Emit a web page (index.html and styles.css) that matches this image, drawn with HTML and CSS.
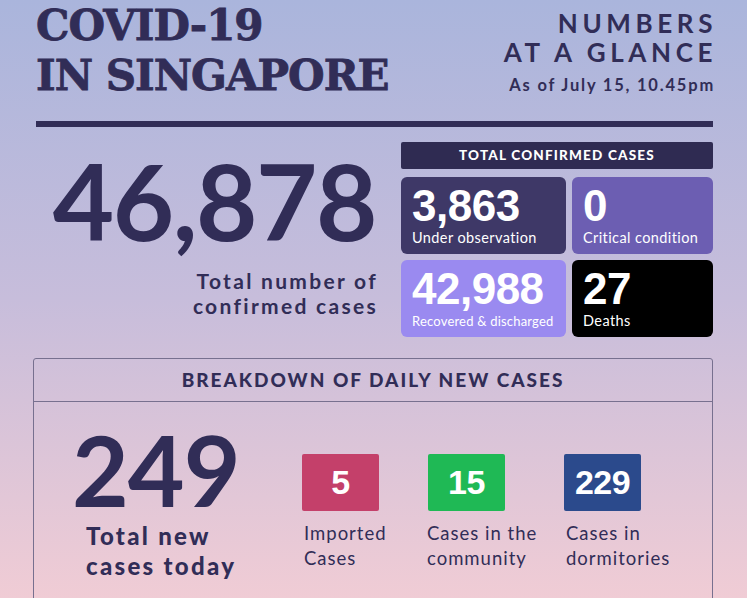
FILE: index.html
```html
<!DOCTYPE html>
<html>
<head>
<meta charset="utf-8">
<link rel="stylesheet" href="styles.css">
</head>
<body>
<div class="page">
  <header class="top">
    <h1 class="title">COVID-19<br>IN SINGAPORE</h1>
    <div class="glance">
      <div class="glance-head">NUMBERS<br>AT A GLANCE</div>
      <div class="asof">As of July 15, 10.45pm</div>
    </div>
  </header>
  <div class="rule"></div>
  <section class="summary">
    <div class="total">
      <div class="total-num">46,878</div>
      <div class="total-label">Total number of<br>confirmed cases</div>
    </div>
    <div class="panel">
      <div class="panel-head">TOTAL CONFIRMED CASES</div>
      <div class="cards">
        <div class="card c-obs"><div class="card-num">3,863</div><div class="card-label">Under observation</div></div>
        <div class="card c-crit"><div class="card-num">0</div><div class="card-label">Critical condition</div></div>
        <div class="card c-rec"><div class="card-num">42,988</div><div class="card-label">Recovered &amp; discharged</div></div>
        <div class="card c-death"><div class="card-num">27</div><div class="card-label">Deaths</div></div>
      </div>
    </div>
  </section>
  <section class="breakdown">
    <div class="bd-head">BREAKDOWN OF DAILY NEW CASES</div>
    <div class="bd-body">
      <div class="new-total">
        <div class="new-num">249</div>
        <div class="new-label">Total new<br>cases today</div>
      </div>
      <div class="types">
        <div class="type t1"><div class="tbox red">5</div><div class="tlabel">Imported<br>Cases</div></div>
        <div class="type t2"><div class="tbox green">15</div><div class="tlabel">Cases in the<br>community</div></div>
        <div class="type t3"><div class="tbox blue">229</div><div class="tlabel">Cases in<br>dormitories</div></div>
      </div>
    </div>
  </section>
</div>
</body>
</html>
```
FILE: styles.css
```css
html, body {
  margin: 0;
  padding: 0;
}
body {
  width: 747px;
  height: 598px;
  overflow: hidden;
  background: linear-gradient(180deg, #aab5dc 0%, #c7bddb 50%, #f0ccd5 100%);
  color: #312d57;
  font-family: "Lato", "Liberation Sans", sans-serif;
}
.page {
  padding: 0 34px 0 36px;
}
.top {
  display: flex;
  justify-content: space-between;
  align-items: flex-start;
}
.title {
  margin: 0;
  padding-top: 1px;
  font-family: "DejaVu Serif", "Liberation Serif", serif;
  font-weight: 700;
  font-size: 42px;
  line-height: 50px;
  letter-spacing: -1px;
  color: #312d57;
  -webkit-text-stroke: 0.8px #312d57;
}
.glance {
  text-align: right;
  padding-top: 9px;
}
.glance-head {
  font-weight: 700;
  font-size: 26px;
  line-height: 29px;
  letter-spacing: 4.6px;
  margin-right: -4px;
}
.asof {
  font-weight: 700;
  font-size: 16.5px;
  line-height: 18px;
  margin-top: 9px;
  letter-spacing: 1.8px;
  margin-right: -2px;
}
.rule {
  height: 6px;
  background: #312d57;
  margin-top: 20px;
}
.summary {
  display: flex;
  justify-content: space-between;
  margin-top: 15px;
}
.total {
  width: 340px;
  text-align: right;
}
.total-num {
  font-weight: 700;
  font-size: 106px;
  line-height: 108px;
  margin-top: 4px;
  letter-spacing: -1.5px;
}
.total-label {
  font-weight: 700;
  font-size: 21px;
  line-height: 25px;
  letter-spacing: 2.3px;
  margin-top: 14px;
  margin-right: -2px;
}
.panel {
  width: 312px;
}
.panel-head {
  background: #2f2b52;
  color: #fff;
  height: 27px;
  line-height: 27px;
  text-align: center;
  font-weight: 900;
  font-size: 13.5px;
  letter-spacing: 1.2px;
  border-radius: 2px;
}
.cards {
  margin-top: 8px;
  display: grid;
  grid-template-columns: 165px 141px;
  grid-auto-rows: 77px;
  gap: 6px;
}
.card {
  border-radius: 6px;
  color: #fff;
  padding: 6px 0 0 11px;
  box-sizing: border-box;
}
.card-num {
  font-family: "Liberation Sans", Arial, sans-serif;
  font-weight: 700;
  font-size: 44px;
  line-height: 46px;
  letter-spacing: -0.5px;
}
.card-label {
  font-size: 14.5px;
  line-height: 16px;
  margin-top: 1px;
  letter-spacing: 0.4px;
}
.c-obs { background: #3e3867; }
.c-crit { background: #6c5eb2; }
.c-rec { background: #9a8af0; }
.c-death { background: #000; }
.c-rec .card-label { font-size: 13px; letter-spacing: 0.2px; }
.breakdown {
  margin: 21px 0 0 -3px;
  border: 1px solid #77708f;
  border-radius: 3px;
  height: 300px;
}
.bd-head {
  height: 42px;
  line-height: 42px;
  border-bottom: 1px solid #77708f;
  text-align: center;
  font-weight: 900;
  font-size: 19px;
  letter-spacing: 2px;
}
.bd-body {
  display: flex;
  align-items: flex-start;
  padding: 27px 0 0 38px;
}
.new-total {
  width: 230px;
}
.new-num {
  font-weight: 700;
  font-size: 98px;
  line-height: 80px;
  letter-spacing: -1px;
}
.new-label {
  font-weight: 900;
  font-size: 24px;
  line-height: 30px;
  letter-spacing: 2.3px;
  margin-left: 14px;
  margin-top: 12px;
}
.types {
  display: flex;
  padding-top: 25px;
}
.type {
  flex: none;
}
.t1 { width: 126px; }
.t2 { width: 136px; }
.tbox {
  width: 77px;
  height: 57px;
  border-radius: 2px;
  color: #fff;
  font-family: "Liberation Sans", Arial, sans-serif;
  font-weight: 700;
  font-size: 34px;
  line-height: 57px;
  text-align: center;
  letter-spacing: -0.5px;
}
.red { background: #c4406a; }
.green { background: #1fb955; }
.blue { background: #2b4a8c; }
.tlabel {
  font-size: 18.5px;
  line-height: 25px;
  letter-spacing: 1px;
  margin-top: 10px;
  margin-left: 2px;
}
.t2 .tlabel { margin-left: -1px; }
```
